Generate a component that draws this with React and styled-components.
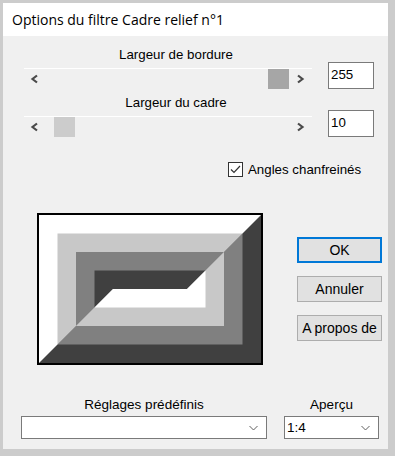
import styled, { createGlobalStyle } from "styled-components";

const GlobalStyle = createGlobalStyle`
  html, body {
    margin: 0;
    padding: 0;
    background: #f0f0f0;
  }
  * {
    box-sizing: border-box;
  }
`;

const Window = styled.div`
  width: 395px;
  height: 456px;
  border-style: solid;
  border-color: #cccccc;
  border-width: 3px 7px 7px 3px;
  background: #f0f0f0;
  display: flex;
  flex-direction: column;
  font-family: "Liberation Sans", Arial, sans-serif;
  color: #000;
`;

const TitleBar = styled.div`
  height: 33px;
  flex-shrink: 0;
  background: #ffffff;
  display: flex;
  align-items: center;
  padding-left: 9px;
  font-family: "Open Sans", "Noto Sans", sans-serif;
  font-size: 14px;
  color: #000;
`;

const Body = styled.div`
  flex: 1;
  display: flex;
  flex-direction: column;
  padding: 9px 0 0 0;
`;

// Sliders
const SliderList = styled.div`
  display: flex;
  flex-direction: column;
  gap: 4px;
  padding-left: 21px;
`;

const SliderRow = styled.div`
  display: grid;
  grid-template-columns: 304px 46px;
  align-items: end;
`;

const SliderBlock = styled.div`
  display: flex;
  flex-direction: column;
`;

const SliderLabel = styled.div`
  height: 20px;
  line-height: 20px;
  text-align: center;
  font-size: 13.3px;
  margin-bottom: 3px;
`;

const TrackLine = styled.div`
  width: 288px;
  height: 1px;
  background: #ffffff;
`;

const Controls = styled.div`
  width: 288px;
  height: 20px;
  display: flex;
  align-items: center;
`;

const ArrowBtn = styled.div`
  width: ${(p) => p.$w}px;
  height: 20px;
  display: flex;
  align-items: center;
  justify-content: center;
  flex-shrink: 0;
`;

const Track = styled.div`
  position: relative;
  flex: 1;
  height: 20px;
`;

const Thumb = styled.div`
  position: absolute;
  top: 0;
  width: 21px;
  height: 20px;
  background: ${(p) => p.$color};
`;

const NumberBox = styled.div`
  width: 46px;
  height: 27px;
  background: #ffffff;
  border: 1px solid #7a7a7a;
  font-size: 13.3px;
  padding: 4px 0 0 2px;
`;

const Chevron = ({ dir }) => (
  <svg width="9" height="10" viewBox="0 0 9 10">
    <polyline
      points={dir === "left" ? "7,1.5 2.5,5 7,8.5" : "2,1.5 6.5,5 2,8.5"}
      fill="none"
      stroke="#4a4a4a"
      strokeWidth="2.2"
    />
  </svg>
);

const Slider = ({ label, value, max, thumbColor }) => {
  const trackWidth = 244;
  const left = Math.round((value / max) * (trackWidth - 21));
  return (
    <SliderRow>
      <SliderBlock>
        <SliderLabel>{label}</SliderLabel>
        <TrackLine />
        <Controls>
          <ArrowBtn $w={21}>
            <Chevron dir="left" />
          </ArrowBtn>
          <Track>
            <Thumb $color={thumbColor} style={{ left }} />
          </Track>
          <ArrowBtn $w={23}>
            <Chevron dir="right" />
          </ArrowBtn>
        </Controls>
      </SliderBlock>
      <NumberBox>{value}</NumberBox>
    </SliderRow>
  );
};

// Checkbox
const CheckRow = styled.label`
  display: flex;
  align-items: center;
  gap: 5px;
  margin-top: 25px;
  padding-left: 225px;
  height: 15px;
  font-size: 13.3px;
`;

const Box = styled.span`
  width: 15px;
  height: 15px;
  border: 1px solid #333333;
  background: #ffffff;
  display: flex;
  align-items: center;
  justify-content: center;
`;

// Preview + buttons
const Middle = styled.div`
  display: flex;
  margin-top: 36px;
  padding-left: 34px;
  gap: 34px;
`;

const PreviewFrame = styled.div`
  width: 226px;
  height: 152px;
  border: 2px solid #000000;
  background: #ffffff;
  display: flex;
`;

const ButtonCol = styled.div`
  display: flex;
  flex-direction: column;
  gap: 13px;
  padding-top: 24px;
`;

const Button = styled.div`
  width: 85px;
  height: 26px;
  background: #e1e1e1;
  border: ${(p) => (p.$default ? "2px solid #0078d7" : "1px solid #adadad")};
  display: flex;
  align-items: center;
  justify-content: center;
  font-size: 14px;
`;

const bands = [
  ["#ffffff", "#404040"],
  ["#c8c8c8", "#808080"],
  ["#808080", "#c8c8c8"],
  ["#404040", "#ffffff"],
];

const Preview = () => {
  const W = 222;
  const H = 148;
  const t = 18.5;
  return (
    <PreviewFrame>
      <svg width={W} height={H} viewBox={`0 0 ${W} ${H}`}>
        {bands.map(([light, dark], i) => {
          const x0 = i * t;
          const y0 = i * t;
          const x1 = W - i * t;
          const y1 = H - i * t;
          const h = (y1 - y0) / 2;
          const tl = `${x0},${y0} ${x1},${y0} ${x1 - h},${y0 + h} ${x0 + h},${y0 + h} ${x0},${y1}`;
          const br = `${x1},${y0} ${x1},${y1} ${x0},${y1} ${x0 + h},${y0 + h} ${x1 - h},${y0 + h}`;
          return (
            <g key={i}>
              <polygon points={tl} fill={light} />
              <polygon points={br} fill={dark} />
            </g>
          );
        })}
      </svg>
    </PreviewFrame>
  );
};

// Bottom selects
const Bottom = styled.div`
  display: flex;
  gap: 17px;
  margin-top: 31px;
  padding-left: 18px;
`;

const Field = styled.div`
  display: flex;
  flex-direction: column;
  width: ${(p) => p.$w}px;
`;

const FieldLabel = styled.div`
  height: 18px;
  line-height: 18px;
  text-align: center;
  font-size: 13.5px;
  margin-bottom: 2px;
`;

const Select = styled.div`
  height: 23px;
  background: #ffffff;
  border: 1px solid #7a7a7a;
  display: flex;
  align-items: center;
  justify-content: space-between;
  padding: 0 8px 0 2px;
  font-size: 13.5px;
`;

const DropArrow = () => (
  <svg width="9" height="6" viewBox="0 0 9 6">
    <polyline points="0.5,1 4.5,5 8.5,1" fill="none" stroke="#606060" strokeWidth="1" />
  </svg>
);

const App = () => {
  return (
    <>
      <GlobalStyle />
      <Window>
        <TitleBar>Options du filtre Cadre relief n°1</TitleBar>
        <Body>
          <SliderList>
            <Slider label="Largeur de bordure" value={255} max={255} thumbColor="#a6a6a6" />
            <Slider label="Largeur du cadre" value={10} max={255} thumbColor="#cccccc" />
          </SliderList>
          <CheckRow>
            <Box>
              <svg width="11" height="9" viewBox="0 0 11 9">
                <polyline points="1,4.5 4,7.5 10,1" fill="none" stroke="#333333" strokeWidth="1.2" />
              </svg>
            </Box>
            Angles chanfreinés
          </CheckRow>
          <Middle>
            <Preview />
            <ButtonCol>
              <Button $default>OK</Button>
              <Button>Annuler</Button>
              <Button>A propos de</Button>
            </ButtonCol>
          </Middle>
          <Bottom>
            <Field $w={246}>
              <FieldLabel>Réglages prédéfinis</FieldLabel>
              <Select>
                <span />
                <DropArrow />
              </Select>
            </Field>
            <Field $w={95}>
              <FieldLabel>Aperçu</FieldLabel>
              <Select>
                <span>1:4</span>
                <DropArrow />
              </Select>
            </Field>
          </Bottom>
        </Body>
      </Window>
    </>
  );
};

export default App;
